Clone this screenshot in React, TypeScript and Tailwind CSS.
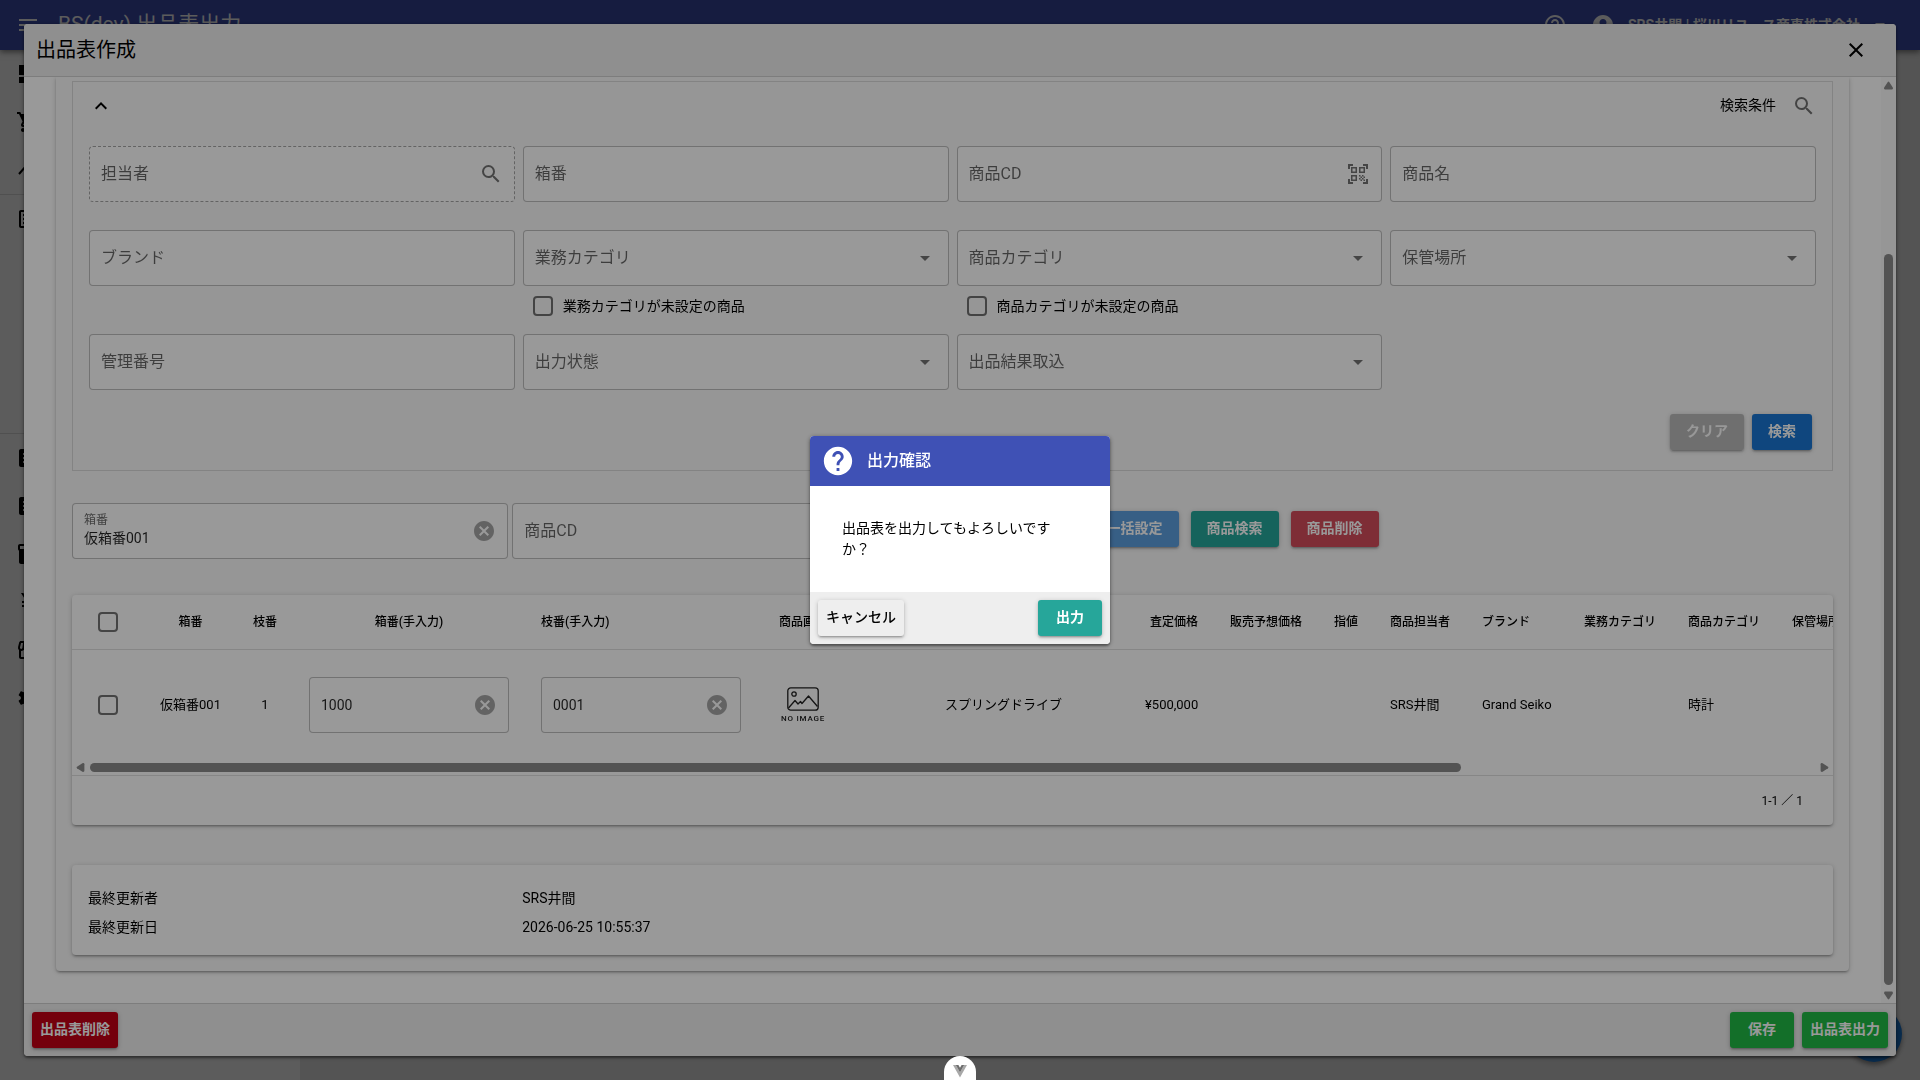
import type { ReactNode } from "react";
import {
  MdAccountCircle,
  MdArrowDropDown,
  MdArticle,
  MdCancel,
  MdClose,
  MdCurrencyYen,
  MdDashboard,
  MdExpandLess,
  MdHelp,
  MdHelpOutline,
  MdInventory2,
  MdMenu,
  MdOutlineArticle,
  MdOutlineStorefront,
  MdQrCodeScanner,
  MdSearch,
  MdSettings,
  MdShoppingCart,
} from "react-icons/md";

const raised = "shadow-[0_1px_5px_rgba(0,0,0,0.2),0_2px_2px_rgba(0,0,0,0.14),0_3px_1px_-2px_rgba(0,0,0,0.12)]";

function Button({ children, className }: { children: ReactNode; className: string }) {
  return (
    <button type="button" className={`h-9 min-w-[60px] rounded-[3px] pb-[3px] text-sm ${raised} ${className}`}>
      {children}
    </button>
  );
}

const box = "flex h-14 items-center rounded border bg-white px-[11px]";

function TextField({ label, icon, dashed }: { label: string; icon?: ReactNode; dashed?: boolean }) {
  return (
    <div className={`${box} ${dashed ? "border-dashed border-black/35" : "border-black/25"}`}>
      <input
        type="text"
        aria-label={label}
        placeholder={label}
        className="min-w-0 flex-1 bg-transparent text-base outline-none placeholder:text-black/60"
      />
      {icon}
    </div>
  );
}

function SelectField({ label }: { label: string }) {
  return (
    <div className={`${box} relative border-black/25`}>
      <select aria-label={label} className="min-w-0 flex-1 appearance-none bg-transparent text-base text-black/60 outline-none">
        <option>{label}</option>
      </select>
      <MdArrowDropDown className="pointer-events-none size-6 text-black/55" />
    </div>
  );
}

function ValueField({ label, value }: { label: string; value: string }) {
  return (
    <div className={`${box} border-black/25`}>
      <input
        type="text"
        aria-label={label}
        defaultValue={value}
        className="min-w-0 flex-1 bg-transparent text-sm text-black/85 outline-none"
      />
      <ClearButton />
    </div>
  );
}

function ClearButton() {
  return (
    <button type="button" aria-label="クリア" className="text-black/35">
      <MdCancel className="size-6" />
    </button>
  );
}

function Check({ label }: { label: string }) {
  return (
    <input
      type="checkbox"
      aria-label={label}
      className="block size-5 shrink-0 appearance-none rounded-sm border-2 border-black/55"
    />
  );
}

function CategoryCheck({ label }: { label: string }) {
  return (
    <label className="flex h-10 items-center gap-[10px] pl-[10px] text-sm">
      <input type="checkbox" className="size-5 shrink-0 appearance-none rounded-sm border-2 border-black/55" />
      <span className="pb-px">{label}</span>
    </label>
  );
}

function NoImage() {
  return (
    <div className="flex flex-col items-center gap-1 pt-px">
      <svg viewBox="0 0 32 24" className="h-6 w-8" fill="none" stroke="#222" strokeWidth="1.3" strokeLinejoin="round">
        <rect x="0.8" y="0.8" width="30.4" height="22.4" rx="3" />
        <circle cx="7" cy="7" r="2.2" />
        <path d="M1.5 21 L8 13.5 L11 17 L13.5 14.5 L15 16.5 L21.5 9 L30.5 19.5" />
      </svg>
      <span className="text-[8px] leading-[8px] font-medium tracking-widest text-[#222]">NO IMAGE</span>
    </div>
  );
}

const columns: { w: string; head: string; align: string; cell?: ReactNode }[] = [
  { w: "w-[93px]", head: "箱番", align: "text-center", cell: "仮箱番001" },
  { w: "w-[56px]", head: "枝番", align: "text-center", cell: "1" },
  { w: "w-[232px]", head: "箱番(手入力)", align: "text-center", cell: <ValueField label="箱番(手入力)" value="1000" /> },
  { w: "w-[232px]", head: "枝番(手入力)", align: "text-left", cell: <ValueField label="枝番(手入力)" value="0001" /> },
  { w: "w-[92px]", head: "商品画像", align: "text-center", cell: <NoImage /> },
  { w: "w-[80px]", head: "商品CD", align: "text-left" },
  { w: "w-[200px]", head: "商品名", align: "text-left", cell: "スプリングドライブ" },
  { w: "w-[85px]", head: "査定価格", align: "text-right", cell: "¥500,000" },
  { w: "w-[104px]", head: "販売予想価格", align: "text-right" },
  { w: "w-[56px]", head: "指値", align: "text-right" },
  { w: "w-[92px]", head: "商品担当者", align: "text-left", cell: "SRS井間" },
  { w: "w-[102px]", head: "ブランド", align: "text-left", cell: "Grand Seiko" },
  { w: "w-[104px]", head: "業務カテゴリ", align: "text-left" },
  { w: "w-[104px]", head: "商品カテゴリ", align: "text-left", cell: "時計" },
  { w: "w-[515px]", head: "保管場所", align: "text-left" },
];

function ItemTable() {
  return (
    <section className={`mt-9 overflow-hidden rounded bg-white ${raised}`}>
      <div className="overflow-hidden">
        <table className="w-[2219px] table-fixed border-collapse whitespace-nowrap">
          <thead>
            <tr className="h-[54px] border-b border-black/12 text-xs">
              <th className="w-[72px] pl-[26px]">
                <Check label="すべて選択" />
              </th>
              {columns.map((c) => (
                <th key={c.head} className={`${c.w} ${c.align} px-4 font-medium`}>
                  {c.head}
                </th>
              ))}
            </tr>
          </thead>
          <tbody>
            <tr className="h-[111px] text-[13px]">
              <td className="pl-[26px]">
                <Check label="行を選択" />
              </td>
              {columns.map((c) => (
                <td key={c.head} className={`${c.align} px-4`}>
                  {c.cell}
                </td>
              ))}
            </tr>
          </tbody>
        </table>
      </div>
      <div className="flex h-[15px] items-center gap-[5px] px-1 pb-px">
        <Triangle className="-rotate-90" />
        <div className="flex-1">
          <div className="h-[9px] w-[79.5%] rounded-full bg-[#8b8b8b]" />
        </div>
        <Triangle className="rotate-90" />
      </div>
      <div className="flex h-[50px] items-center justify-end border-t border-black/12 pr-[30px] text-xs">1-1 ／ 1</div>
    </section>
  );
}

function Triangle({ className }: { className?: string }) {
  return (
    <svg viewBox="0 0 9 9" className={`size-[9px] shrink-0 ${className ?? ""}`} fill="#8b8b8b">
      <path d="M3.8 1 Q4.5 0.2 5.2 1 L8.8 6.4 Q9.2 8.4 7.8 8.4 H1.2 Q-0.2 8.4 0.2 6.4 Z" />
    </svg>
  );
}

function SearchPanel() {
  return (
    <section className="border border-black/12 px-4 pb-5">
      <div className="flex h-12 items-center justify-between">
        <button type="button" aria-label="折りたたむ">
          <MdExpandLess className="size-6" />
        </button>
        <div className="flex items-center gap-4 text-sm">
          <span className="pb-0.5">検索条件</span>
          <MdSearch className="size-6 text-black/55" />
        </div>
      </div>
      <div className="mt-4 grid grid-cols-4 gap-x-2">
        <TextField label="担当者" dashed icon={<MdSearch className="size-6 text-black/55" />} />
        <TextField label="箱番" />
        <TextField label="商品CD" icon={<MdQrCodeScanner className="size-6 text-black/55" />} />
        <TextField label="商品名" />
      </div>
      <div className="mt-7 grid grid-cols-4 gap-x-2">
        <TextField label="ブランド" />
        <div>
          <SelectField label="業務カテゴリ" />
          <CategoryCheck label="業務カテゴリが未設定の商品" />
        </div>
        <div>
          <SelectField label="商品カテゴリ" />
          <CategoryCheck label="商品カテゴリが未設定の商品" />
        </div>
        <SelectField label="保管場所" />
      </div>
      <div className="mt-2 grid grid-cols-4 gap-x-2">
        <TextField label="管理番号" />
        <SelectField label="出力状態" />
        <SelectField label="出品結果取込" />
      </div>
      <div className="mt-6 flex justify-end gap-2 pr-1">
        <Button className="bg-[#bababa] px-4 font-bold text-[#fdfdfd]">クリア</Button>
        <Button className="bg-[#1976d2] px-4 font-bold text-white">検索</Button>
      </div>
    </section>
  );
}

function SettingBar() {
  return (
    <section className="mt-8 flex items-center">
      <div className="grid w-1/2 grid-cols-2 gap-x-1 pr-1">
        <div className={`${box} border-black/25`}>
          <label className="flex min-w-0 flex-1 flex-col pb-0.5">
            <span className="text-xs leading-4 text-black/60">箱番</span>
            <input
              type="text"
              defaultValue="仮箱番001"
              className="h-5 w-full bg-transparent text-sm text-black/85 outline-none"
            />
          </label>
          <ClearButton />
        </div>
        <TextField label="商品CD" />
      </div>
      <div className="ml-[138px] flex gap-3 pb-1">
        <Button className="bg-[#5d9ede] px-4 font-bold text-white">一括設定</Button>
        <Button className="bg-[#26a69a] px-4 font-bold text-white">商品検索</Button>
        <Button className="bg-[#d24b5a] px-4 font-bold text-white">商品削除</Button>
      </div>
    </section>
  );
}

function ListingModal() {
  return (
    <div className="fixed inset-6 z-20 flex flex-col overflow-hidden rounded bg-white shadow-[0_1px_5px_rgba(0,0,0,0.4),0_2px_2px_rgba(0,0,0,0.3)]">
      <header className="flex h-[53px] shrink-0 items-center justify-between border-b border-black/12 bg-[#eeeeee] px-3 text-xl">
        <h2>出品表作成</h2>
        <button type="button" aria-label="閉じる" className="mr-4">
          <MdClose className="size-6" />
        </button>
      </header>
      <div className="flex min-h-0 flex-1">
        <div className="min-w-0 flex-1 overflow-hidden px-8">
          <div className={`rounded-b bg-[#fafafa] px-4 pt-1 pb-4 ${raised}`}>
            <SearchPanel />
            <SettingBar />
            <ItemTable />
            <section className={`mt-10 grid h-[90px] grid-cols-4 content-center gap-x-2 gap-y-2 rounded bg-white px-4 pt-1.5 text-sm leading-[21px] ${raised}`}>
              <div>最終更新者</div>
              <div className="col-span-3">SRS井間</div>
              <div>最終更新日</div>
              <div className="col-span-3">2026-06-25 10:55:37</div>
            </section>
          </div>
        </div>
        <div className="flex w-[15px] flex-col items-center bg-[#fafafa] pt-1 pb-[3px]">
          <Triangle />
          <div className="min-h-0 flex-[164]" />
          <div className="min-h-0 w-[9px] flex-[731] rounded-full bg-[#8b8b8b]" />
          <div className="h-[6px]" />
          <Triangle className="rotate-180" />
        </div>
      </div>
      <footer className="flex h-[53px] shrink-0 items-center gap-2 border-t border-black/12 bg-[#eeeeee] px-2">
        <Button className="bg-[#c10015] px-2 font-bold text-white">出品表削除</Button>
        <div className="flex-1" />
        <Button className="w-16 bg-[#21ba45] font-bold text-white">保存</Button>
        <Button className="bg-[#21ba45] px-2 font-bold text-white">出品表出力</Button>
      </footer>
    </div>
  );
}

function ConfirmDialog() {
  return (
    <div className="fixed inset-0 z-30 flex items-center justify-center bg-black/40">
      <div
        role="dialog"
        aria-label="出力確認"
        className="w-[300px] overflow-hidden rounded bg-white shadow-[0_1px_5px_rgba(0,0,0,0.4),0_2px_2px_rgba(0,0,0,0.3)]"
      >
        <header className="flex h-[50px] items-center gap-3 bg-[#3f51b5] px-[11px] text-base font-medium text-white">
          <MdHelp className="size-[34px]" />
          出力確認
        </header>
        <p className="h-[106px] pt-8 pr-12 pl-8 text-sm leading-[21px]">出品表を出力してもよろしいですか？</p>
        <footer className="flex h-[52px] items-center justify-between bg-[#eeeeee] px-2">
          <Button className="px-2 font-medium text-black">キャンセル</Button>
          <Button className="w-16 bg-[#26a69a] font-bold text-white">出力</Button>
        </footer>
      </div>
    </div>
  );
}

function AppShell() {
  return (
    <div className="flex h-screen flex-col bg-[#eaeaea]">
      <header className="z-0 flex h-[50px] shrink-0 items-center bg-[#3f51b5] pr-7 pl-4 text-white shadow-[0_2px_6px_rgba(0,0,0,0.5)]">
        <MdMenu className="size-6" />
        <h1 className="ml-[18px] text-[21px]">BS(dev) 出品表出力</h1>
        <div className="flex-1" />
        <MdHelpOutline className="size-6" />
        <MdAccountCircle className="ml-6 size-6" />
        <span className="ml-[13px] text-sm font-bold">SRS井間 | 桜川リユース商事株式会社</span>
        <MdArrowDropDown className="ml-2 size-6" />
      </header>
      <div className="flex min-h-0 flex-1">
        <nav className="flex w-[300px] flex-col bg-white">
          <NavIcon><MdDashboard className="size-6" /></NavIcon>
          <NavIcon><MdShoppingCart className="size-6" /></NavIcon>
          <NavIcon>
            <svg viewBox="0 0 24 24" className="size-6" fill="none" stroke="currentColor" strokeWidth="2">
              <path d="M3 16 L10 8 L17 16" />
            </svg>
          </NavIcon>
          <div className="h-60 border-y border-black/12">
            <NavIcon><MdOutlineArticle className="size-6" /></NavIcon>
          </div>
          <NavIcon><MdArticle className="size-6" /></NavIcon>
          <NavIcon><MdArticle className="size-6" /></NavIcon>
          <NavIcon><MdInventory2 className="size-6" /></NavIcon>
          <NavIcon><MdCurrencyYen className="size-6" /></NavIcon>
          <NavIcon><MdOutlineStorefront className="size-6" /></NavIcon>
          <NavIcon><MdSettings className="size-6" /></NavIcon>
        </nav>
      </div>
      <button
        type="button"
        aria-label="追加"
        className="fixed right-[18px] bottom-[18px] size-14 rounded-full bg-[#1976d2] shadow-[0_3px_5px_rgba(0,0,0,0.4)]"
      />
    </div>
  );
}

function NavIcon({ children }: { children: ReactNode }) {
  return <div className="flex h-12 shrink-0 items-center px-4">{children}</div>;
}

function DevToolsBadge() {
  return (
    <button
      type="button"
      aria-label="Vue DevTools"
      className="fixed bottom-0 left-1/2 z-40 flex h-6 w-8 -translate-x-1/2 justify-center rounded-t-full bg-white pt-[9px]"
    >
      <svg viewBox="0 0 14 13" className="h-[13px] w-[14px]">
        <path d="M0 0 H2.8 L7 7.4 L11.2 0 H14 L7 12.6 Z" fill="#a8a8a8" />
        <path d="M2.8 0 H5.4 L7 2.8 L8.6 0 H11.2 L7 7.4 Z" fill="#6e6e6e" />
      </svg>
    </button>
  );
}

export default function App() {
  return (
    <div className="font-[Roboto,'Noto_Sans_CJK_JP',sans-serif] text-black" lang="ja">
      <AppShell />
      <div className="fixed inset-0 z-10 bg-black/40" />
      <ListingModal />
      <ConfirmDialog />
      <DevToolsBadge />
    </div>
  );
}
